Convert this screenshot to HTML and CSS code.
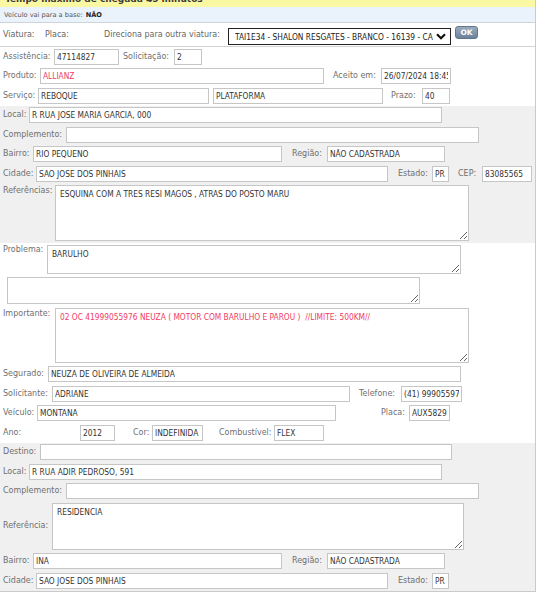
FILE: index.html
```html
<!DOCTYPE html>
<html lang="pt-BR">
<head>
<meta charset="utf-8">
<title>Atendimento</title>
<link rel="stylesheet" href="styles.css">
</head>
<body>
<div class="panel">
  <div class="topbar"><span>Tempo máximo de chegada 45 minutos</span></div>
  <div class="basebar">Veículo vai para a base:<b>NÃO</b></div>
  <div class="viatura-row">
    <span class="vlbl w42">Viatura:</span>
    <span class="vlbl w59">Placa:</span>
    <span class="vlbl w124">Direciona para outra viatura:</span>
    <div class="select">
      <span class="select-text">TAI1E34 - SHALON RESGATES - BRANCO - 16139 - CAMINHÃO</span>
      <svg class="chev" width="10" height="7" viewBox="0 0 10 7"><polyline points="1,1.2 5,5.2 9,1.2" fill="none" stroke="#111" stroke-width="2.2"/></svg>
    </div>
    <button class="ok" type="button">OK</button>
  </div>

  <div class="section">
    <div class="row">
      <label class="lbl w47">Assistência:</label><input class="w65" value="47114827" readonly>
      <label class="lbl w47">Solicitação:</label><input class="w28" value="2" readonly>
    </div>
    <div class="row">
      <label class="lbl w33">Produto:</label><input class="w284 red" value="ALLIANZ" readonly>
      <label class="lbl w44 ml5">Aceito em:</label><input class="w70" value="26/07/2024 18:45" readonly>
    </div>
    <div class="row">
      <label class="lbl w31">Serviço:</label><input class="w171" value="REBOQUE" readonly><input class="w170" value="PLATAFORMA" readonly>
      <label class="lbl w27 ml4">Prazo:</label><input class="w28" value="40" readonly>
    </div>
  </div>

  <div class="section gray">
    <div class="row">
      <label class="lbl w22">Local:</label><input class="w413" value="R RUA JOSE MARIA GARCIA, 000" readonly>
    </div>
    <div class="row">
      <label class="lbl w59">Complemento:</label><input class="w413" value="" readonly>
    </div>
    <div class="row">
      <label class="lbl w26">Bairro:</label><input class="w249" value="RIO PEQUENO" readonly>
      <label class="lbl w31 ml6">Região:</label><input class="w118" value="NÃO CADASTRADA" readonly>
    </div>
    <div class="row">
      <label class="lbl w29">Cidade:</label><input class="w352" value="SAO JOSE DOS PINHAIS" readonly>
      <label class="lbl w30 ml6">Estado:</label><input class="w17" value="PR" readonly>
      <label class="lbl w20 ml5">CEP:</label><input class="w50" value="83085565" readonly>
    </div>
    <div class="row">
      <label class="lbl w48 top">Referências:</label><textarea class="w414 h56" readonly>ESQUINA COM A TRES RESI MAGOS , ATRAS DO POSTO MARU</textarea>
    </div>
  </div>

  <div class="section">
    <div class="row">
      <label class="lbl w40 top0">Problema:</label><textarea class="w414 h29" readonly>BARULHO</textarea>
    </div>
    <div class="row pad7">
      <textarea class="w413 h27" readonly></textarea>
    </div>
    <div class="row">
      <label class="lbl w48 top">Importante:</label><textarea class="w414 h55 red" readonly>02 OC 41999055976 NEUZA ( MOTOR COM BARULHO E PAROU )  //LIMITE: 500KM//</textarea>
    </div>
    <div class="row">
      <label class="lbl w41">Segurado:</label><input class="w413" value="NEUZA DE OLIVEIRA DE ALMEIDA" readonly>
    </div>
    <div class="row">
      <label class="lbl w45">Solicitante:</label><input class="w298" value="ADRIANE" readonly>
      <label class="lbl w38 ml5">Telefone:</label><input class="w61" value="(41) 999055976" readonly>
    </div>
    <div class="row">
      <label class="lbl w30">Veículo:</label><input class="w299" value="MONTANA" readonly>
      <label class="lbl w24 ml41">Placa:</label><input class="w41" value="AUX5829" readonly>
    </div>
    <div class="row">
      <label class="lbl w73">Ano:</label><input class="w35" value="2012" readonly>
      <label class="lbl w15 ml14">Cor:</label><input class="w51" value="INDEFINIDA" readonly>
      <label class="lbl w51 ml12">Combustível:</label><input class="w50" value="FLEX" readonly>
    </div>
  </div>

  <div class="section gray">
    <div class="row">
      <label class="lbl w33">Destino:</label><input class="w412" value="" readonly>
    </div>
    <div class="row">
      <label class="lbl w22">Local:</label><input class="w413" value="R RUA ADIR PEDROSO, 591" readonly>
    </div>
    <div class="row">
      <label class="lbl w59">Complemento:</label><input class="w413" value="" readonly>
    </div>
    <div class="row">
      <label class="lbl w45">Referência:</label><textarea class="w412 h47" readonly>RESIDENCIA</textarea>
    </div>
    <div class="row">
      <label class="lbl w26">Bairro:</label><input class="w249" value="INA" readonly>
      <label class="lbl w31 ml6">Região:</label><input class="w118" value="NÃO CADASTRADA" readonly>
    </div>
    <div class="row">
      <label class="lbl w29">Cidade:</label><input class="w352" value="SAO JOSE DOS PINHAIS" readonly>
      <label class="lbl w30 ml6">Estado:</label><input class="w17" value="PR" readonly>
    </div>
  </div>
</div>
</body>
</html>
```
FILE: styles.css
```css
* { box-sizing: border-box; }
body {
  margin: 0;
  background: #fff;
  font-family: "DejaVu Sans", Verdana, sans-serif;
  font-size: 8px;
  color: #6f6f6f;
}
.panel {
  width: 536px;
  border-right: 1px solid #cacaca;
  border-bottom: 1px solid #cacaca;
}
.topbar {
  height: 7px;
  overflow: hidden;
  background: #fbf8a3;
}
.topbar span {
  display: block;
  margin-top: -6px;
  padding-left: 5px;
  font-weight: bold;
  font-size: 9px;
  line-height: 11px;
  color: #3a3a3a;
}
.basebar {
  height: 16px;
  background: #eaf2fc;
  border-bottom: 1px solid #cfd4da;
  display: flex;
  align-items: center;
  padding-left: 4px;
  font-size: 6.6px;
  color: #555;
}
.basebar b { margin-left: 3px; color: #222; }

.viatura-row {
  height: 24px;
  border-bottom: 1px solid #d2d2d2;
  display: flex;
  align-items: flex-start;
  padding-left: 3px;
}
.vlbl {
  margin-top: 7px;
  line-height: 10px;
  white-space: nowrap;
  color: #666;
  flex: none;
}
.select {
  flex: none;
  width: 223px;
  height: 17px;
  margin-top: 5px;
  border: 1px solid #222;
  background: #fff;
  display: flex;
  align-items: center;
  padding: 0 4px 0 6px;
  overflow: hidden;
  font-family: "DejaVu Sans Condensed", sans-serif;
  font-size: 8.3px;
  color: #222;
}
.select-text { flex: 1; white-space: nowrap; overflow: hidden; }
.chev { flex: none; margin-left: 3px; }
.ok {
  flex: none;
  width: 23px;
  height: 13px;
  margin: 3px 0 0 4px;
  padding: 0;
  border: 1px solid #62768b;
  border-radius: 3px;
  background: linear-gradient(#9aabbd, #6c8199);
  color: #fff;
  font-family: "DejaVu Sans", sans-serif;
  font-weight: bold;
  font-size: 7.5px;
  line-height: 11px;
}

.section.gray { background: #f0f0f0; }
.row {
  display: flex;
  align-items: center;
  gap: 4px;
  padding: 1.75px 0 1.75px 3px;
}
.row.pad7 { padding-left: 7px; }
.lbl {
  flex: none;
  white-space: nowrap;
  line-height: 10px;
}
.lbl.top { align-self: flex-start; margin-top: 1px; }
.lbl.top0 { align-self: flex-start; margin-top: 0; }

input, textarea {
  flex: none;
  margin: 0;
  border: 1px solid #c6c6c6;
  border-radius: 0;
  background: #fff;
  outline: none;
  font-family: "DejaVu Sans Condensed", sans-serif;
  font-size: 8.3px;
  color: #333;
}
input { height: 16px; padding: 0 2px; line-height: 14px; }
textarea { padding: 3px 4px; line-height: 10px; }
.red { color: #f03c66; }

.ml4 { margin-left: 4px; }
.ml5 { margin-left: 5px; }
.ml6 { margin-left: 6px; }
.ml12 { margin-left: 12px; }
.ml14 { margin-left: 14px; }
.ml41 { margin-left: 41px; }

.w15 { width: 15px; }
.w17 { width: 17px; }
.w20 { width: 20px; }
.w22 { width: 22px; }
.w24 { width: 24px; }
.w26 { width: 26px; }
.w27 { width: 27px; }
.w28 { width: 28px; }
.w29 { width: 29px; }
.w30 { width: 30px; }
.w31 { width: 31px; }
.w33 { width: 33px; }
.w35 { width: 35px; }
.w38 { width: 38px; }
.w40 { width: 40px; }
.w41 { width: 41px; }
.w42 { width: 42px; }
.w44 { width: 44px; }
.w45 { width: 45px; }
.w47 { width: 47px; }
.w48 { width: 48px; }
.w50 { width: 50px; }
.w51 { width: 51px; }
.w59 { width: 59px; }
.w61 { width: 61px; }
.w65 { width: 65px; }
.w70 { width: 70px; }
.w73 { width: 73px; }
.w118 { width: 118px; }
.w124 { width: 124px; }
.w170 { width: 170px; }
.w171 { width: 171px; }
.w249 { width: 249px; }
.w284 { width: 284px; }
.w298 { width: 298px; }
.w299 { width: 299px; }
.w352 { width: 352px; }
.w412 { width: 412px; }
.w413 { width: 413px; }
.w414 { width: 414px; }

.h27 { height: 27px; }
.h29 { height: 29px; }
.h47 { height: 47px; }
.h55 { height: 55px; }
.h56 { height: 56px; }
```
